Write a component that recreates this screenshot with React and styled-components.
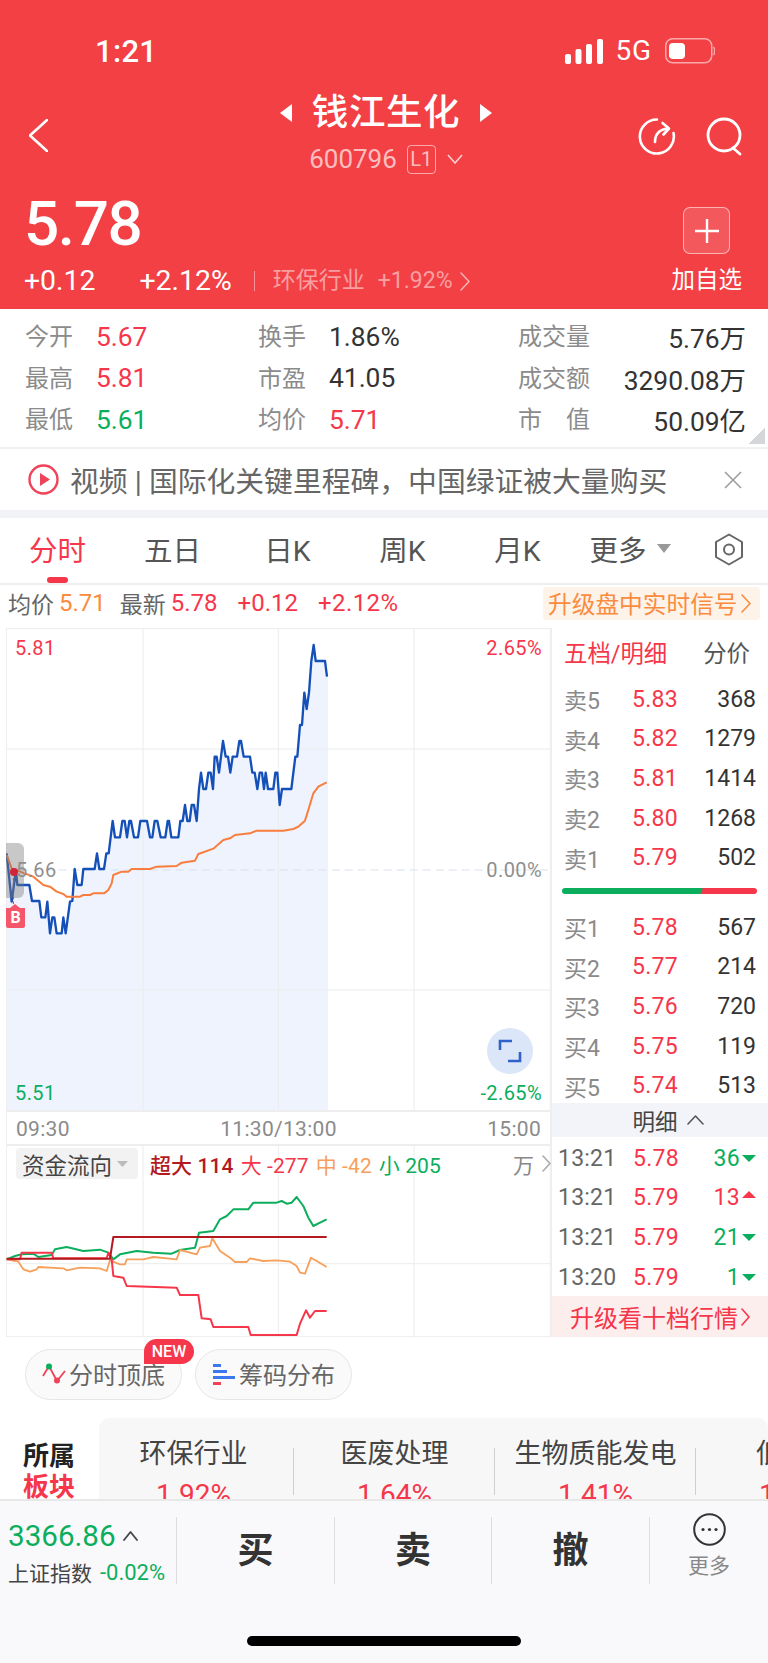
import React from 'react';
import styled, { createGlobalStyle } from 'styled-components';

const FONT = `Roboto, "Noto Sans CJK SC", "Noto Sans", sans-serif`;
const RED = '#f6364a';
const GREEN = '#0bae5c';
const ORANGE = '#fb8b3e';
const HEAD = '#f24045';

const Global = createGlobalStyle`
  html, body { margin: 0; padding: 0; background: #fff; }
  body { font-family: ${FONT}; }
  * { box-sizing: border-box; }
`;

const Page = styled.div`
  width: 768px; height: 1663px; overflow: hidden; display: flex; flex-direction: column; background: #fff;
`;

/* header */
const Header = styled.header`
  height: 309px; background: ${HEAD}; color: #fff; display: flex; flex-direction: column;
`;
const StatusBar = styled.div`
  height: 91px; padding: 37px 53px 0 95px; display: flex; justify-content: space-between; align-items: flex-start;
`;
const Clock = styled.div`
  font-size: 31px; line-height: 30px; font-weight: 500; letter-spacing: 0.3px;
`;
const StatusRight = styled.div`
  display: flex; align-items: center; gap: 13px; height: 28px; margin-left: -4px;
`;
const NetLabel = styled.span`
  font-size: 28px; line-height: 28px; font-weight: 400; letter-spacing: 0.8px;
`;
const Nav = styled.div`
  display: grid; grid-template-columns: 1fr auto 1fr; height: 89px; align-items: start; padding: 0 25px 0 29px;
`;
const BackWrap = styled.div`
  padding-top: 28px; display: flex;
`;
const NavCenter = styled.div`
  display: flex; flex-direction: column; align-items: center;
`;
const TitleRow = styled.div`
  display: flex; align-items: center; gap: 20px; height: 44px;
`;
const Title = styled.div`
  font-size: 36.5px; line-height: 44px; font-weight: 500; letter-spacing: 0.6px;
`;
const SubRow = styled.div`
  display: flex; align-items: center; margin-top: 9px; height: 30px; color: rgba(255,255,255,.68);
`;
const Code = styled.span`
  font-size: 26px; line-height: 30px;
`;
const LevelTag = styled.span`
  margin: 0 11px 0 10px; width: 29px; height: 29px; border: 1px solid rgba(255,255,255,.55); border-radius: 4px;
  font-size: 20px; line-height: 27px; text-align: center;
`;
const NavIcons = styled.div`
  display: flex; justify-content: flex-end; gap: 30px; padding-top: 26px;
`;
const PriceArea = styled.div`
  display: flex; justify-content: space-between; padding: 12px 26px 0 24px;
`;
const PriceCol = styled.div`
  display: flex; flex-direction: column;
`;
const BigPrice = styled.div`
  font-size: 62px; line-height: 64px; font-weight: 500; letter-spacing: -1.4px;
`;
const QuoteRow = styled.div`
  display: flex; align-items: center; margin-top: 10px; height: 30px;
`;
const ChangeText = styled.span`
  font-size: 28.4px; line-height: 30px; margin-right: ${p => p.$mr || 0}px;
`;
const Pipe = styled.span`
  width: 1px; height: 20px; background: rgba(255,255,255,.45); margin-right: 18px;
`;
const Faint = styled.span`
  font-size: 23px; line-height: 30px; color: rgba(255,255,255,.5); margin-right: ${p => p.$mr || 0}px;
`;
const AddCol = styled.div`
  display: flex; flex-direction: column; align-items: center; padding-top: 15px;
`;
const AddBtn = styled.div`
  width: 47px; height: 47px; border-radius: 7px; border: 1px solid rgba(255,255,255,.55);
  background: rgba(255,255,255,.13); display: flex; align-items: center; justify-content: center;
`;
const AddLabel = styled.div`
  margin-top: 11px; font-size: 23.5px; line-height: 30px;
`;

/* stats */
const Stats = styled.section`
  height: 138px; padding: 6px 22px 0 25px; display: grid; grid-template-columns: 233px 260px 1fr; grid-auto-rows: 41.5px;
  background: linear-gradient(135deg, transparent 50%, #d5d6d9 50%) 749px 119px / 16px 16px no-repeat;
`;
const Stat = styled.div`
  display: flex; align-items: center; justify-content: ${p => (p.$wide ? 'space-between' : 'flex-start')};
`;
const StatLabel = styled.span`
  font-size: 24px; color: #8b8b8b; width: ${p => (p.$wide ? 'auto' : '71px')}; margin-top: -2px;
`;
const StatValue = styled.span`
  font-size: 26.4px; color: ${p => p.$c || '#333'}; margin-top: 2px;
`;

/* banner */
const Banner = styled.section`
  height: 63px; border-top: 2px solid #f0f1f4; padding: 0 26px 0 28px; display: flex; align-items: center;
`;
const BannerText = styled.div`
  margin-left: 11px; flex: 1; font-size: 28.8px; color: #666; white-space: nowrap;
`;
const Gap = styled.div`
  height: 8px; background: #f2f3f7;
`;

/* tabs */
const Tabs = styled.nav`
  height: 67px; border-bottom: 2px solid #eee; display: grid; grid-template-columns: repeat(6, 115px) 1fr; align-items: center;
`;
const Tab = styled.div`
  height: 65px; display: flex; align-items: center; justify-content: center; gap: 10px; position: relative;
  font-size: 28.5px; color: ${p => (p.$on ? RED : '#555')}; padding: 0 ${p => p.$pr || 0}px 4px 0;
  ${p => p.$on && `&::after { content: ''; position: absolute; left: 47px; bottom: 0; width: 21px; height: 6px; border-radius: 3px; background: ${RED}; }`}
`;
const TabIcon = styled.div`
  display: flex; justify-content: center; padding: 0 0 3px 0;
`;

/* quote line */
const QuoteLine = styled.div`
  height: 43px; display: flex; align-items: center; padding: 0 8px 7px 8px;
`;
const QLabel = styled.span`
  font-size: 23px; color: #666; margin-right: 5px;
`;
const QValue = styled.span`
  font-size: 24px; color: ${p => p.$c}; margin-right: ${p => p.$mr}px; letter-spacing: ${p => p.$ls || 0}px;
`;
const UpgradeChip = styled.div`
  margin-left: auto; width: 217px; height: 33px; background: #fdf3e8; border-radius: 4px; padding-left: 5px;
  display: flex; align-items: center; gap: 3px; font-size: 23.7px; color: ${ORANGE}; white-space: nowrap;
`;

/* market */
const Market = styled.section`
  display: grid; grid-template-columns: 551px 217px; height: 709px;
`;
const ChartCol = styled.div`
  padding-left: 6px; display: flex; flex-direction: column;
`;
const ChartBox = styled.div`
  position: relative; height: ${p => p.$h}px; width: 545px;
`;
const PlotSvg = styled.svg`
  display: block; width: 545px; height: ${p => p.$h}px;
`;
const AxisLabel = styled.span`
  position: absolute; font-size: 20px; letter-spacing: 0.4px; line-height: 22px; color: ${p => p.$c};
  ${p => p.$left !== undefined && `left: ${p.$left}px;`}
  ${p => p.$right !== undefined && `right: ${p.$right}px;`}
  top: ${p => p.$top}px;
`;
const Handle = styled.div`
  position: absolute; left: 0; top: 215px; width: 18px; height: 55px; background: rgba(125,125,125,.42); border-radius: 0 6px 6px 0;
`;
const BuyMark = styled.div`
  position: absolute; left: 0; top: 280px; width: 19px; height: 20px; background: #f6566a; color: #fff;
  font-size: 16px; font-weight: 700; line-height: 20px; text-align: center; border-radius: 0 0 2px 2px;
  &::before { content: ''; position: absolute; left: 4px; top: -4px; border: 5px solid transparent; border-top: 0; border-bottom: 4px solid #f6566a; }
`;
const Expand = styled.div`
  position: absolute; left: 481px; top: 400px; width: 46px; height: 46px; border-radius: 50%; background: #dbe6f8;
  display: flex; align-items: center; justify-content: center;
`;
const TimeRow = styled.div`
  height: 36px; width: 545px; border-top: 2px solid #eee; border-bottom: 2px solid #eee; border-right: 1px solid #eee; border-left: 1px solid #eee;
  display: flex; justify-content: space-between; align-items: center; padding: 2px 9px 0; font-size: 21px; letter-spacing: 0.3px; color: #8a8a8a;
`;
const FlowLegend = styled.div`
  position: absolute; left: 10px; top: 2px; right: 0; display: flex; align-items: center; height: 31px; font-size: 21px;
`;
const FlowChip = styled.div`
  width: 122px; height: 31px; background: #f2f2f2; border-radius: 4px; padding-left: 6px; display: flex; align-items: center; gap: 5px;
  font-size: 22.5px; color: #444; margin-right: 12px;
`;
const FlowItem = styled.span`
  color: ${p => p.$c}; margin-right: 7px; white-space: nowrap; font-weight: ${p => p.$w || 400}; letter-spacing: 0.1px;
`;
const FlowUnit = styled.span`
  margin-left: auto; display: flex; align-items: center; gap: 8px; color: #888; font-size: 21px;
`;

/* order book */
const Book = styled.div`
  border-left: 1px solid #eee; display: flex; flex-direction: column;
`;
const BookHead = styled.div`
  height: 50px; padding: 0 18px 3px 12px; display: flex; justify-content: space-between; align-items: center; font-size: 23.4px;
`;
const BookTitle = styled.span`
  color: ${p => p.$c};
`;
const BookRow = styled.div`
  height: 39.6px; padding: 3px 12px 0 ${p => p.$pl || 12}px; display: grid; grid-template-columns: ${p => p.$time ? '75px' : '68px'} 1fr auto; align-items: center; font-size: 23px;
`;
const RowLabel = styled.span`
  color: ${p => p.$c || '#8a8a8a'}; font-size: ${p => p.$fs || 23}px; letter-spacing: ${p => p.$ls || 0}px;
`;
const RowPrice = styled.span`
  color: ${RED}; letter-spacing: 0.3px;
`;
const RowQty = styled.span`
  color: #333;
`;
const RatioBar = styled.div`
  height: 30px; padding: 12px 11px 0 10px;
`;
const RatioTrack = styled.div`
  height: 6px; border-radius: 3px; background: linear-gradient(105deg, ${GREEN} 71%, ${RED} 72%);
`;
const DetailHead = styled.div`
  height: 34px; margin-top: -1px; background: #f2f4f9; display: flex; align-items: center; justify-content: center; gap: 9px; font-size: 22.5px; color: #444; padding-left: 16px;
`;
const VolCell = styled.span`
  display: flex; align-items: center; gap: 2px; color: ${p => p.$c}; letter-spacing: 0.3px;
`;
const Tri = styled.span`
  width: 0; height: 0; border-left: 7px solid transparent; border-right: 7px solid transparent;
  ${p => (p.$up ? `border-bottom: 7px solid ${RED}; margin-top: -6px;` : `border-top: 7px solid ${GREEN}; margin-top: 1px;`)}
`;
const BookUpgrade = styled.div`
  margin-top: 1px; height: 41px; background: #fdeeee; color: ${RED}; font-size: 24px; display: flex; align-items: center; justify-content: center; gap: 3px;
`;

/* chips */
const ChipRow = styled.div`
  display: flex; gap: 13px; padding: 12px 0 0 25px; height: 63px;
`;
const Pill = styled.div`
  position: relative; width: 157px; height: 51px; border: 1px solid #e6e6e6; border-radius: 26px; background: #fafafa;
  display: flex; align-items: center; padding: 0 0 2px 16px; gap: 3px; font-size: 24px; color: #666;
`;
const NewBadge = styled.span`
  position: absolute; left: 118px; top: -11px; width: 50px; height: 25px; background: ${RED}; color: #fff;
  border-radius: 13px 13px 13px 0; font-size: 16px; line-height: 25px; text-align: center; font-weight: 500;
`;

/* sectors */
const SectorWrap = styled.section`
  margin-top: 18px; height: 81px; overflow: hidden; display: flex;
`;
const SectorHead = styled.div`
  width: 99px; padding: 23px 0 0 23px; font-size: 26px; font-weight: 700; line-height: 31px; color: #222;
`;
const SectorHot = styled.div`
  color: ${RED}; line-height: 23px; margin-top: 4px;
`;
const SectorPanel = styled.div`
  flex: 1; background: #f7f7f7; border-radius: 10px 10px 0 0; display: flex; overflow: hidden;
`;
const SectorTrack = styled.div`
  display: flex; margin-left: -6px; flex: none;
`;
const SectorCell = styled.div`
  width: 201px; flex: none; padding-top: 19px; text-align: center; white-space: nowrap;
  background: linear-gradient(#cfcfcf, #cfcfcf) right 30px / 1px 47px no-repeat;
`;
const SectorName = styled.div`
  font-size: 27px; line-height: 34px; color: #444;
`;
const SectorValue = styled.div`
  margin-top: 7px; font-size: 28px; line-height: 34px; color: ${RED};
`;

/* footer */
const Footer = styled.footer`
  flex: 1; background: #f9f9fb; border-top: 2px solid #e8e8e8; padding-top: 16px; display: flex; flex-direction: column; align-items: center;
`;
const FooterGrid = styled.div`
  width: 768px; height: 60px; display: grid; grid-template-columns: 177px 158px 157px 158px 1fr;
`;
const IndexCell = styled.div`
  border-right: 1px solid #ddd; padding: 4px 0 0 8px; display: flex; flex-direction: column;
`;
const IndexTop = styled.div`
  display: flex; align-items: center; gap: 7px; height: 30px; font-size: 29.6px; color: ${GREEN};
`;
const IndexBottom = styled.div`
  margin-top: 9px; display: flex; align-items: center; gap: 8px; white-space: nowrap; height: 24px;
`;
const IndexName = styled.span`
  font-size: 21px; color: #444;
`;
const IndexDelta = styled.span`
  font-size: 22px; color: ${GREEN};
`;
const TradeBtn = styled.div`
  border-right: 1px solid #ddd; display: flex; align-items: center; justify-content: center; font-size: 36px; font-weight: 700; color: #333; padding-bottom: 8px;
`;
const MoreCell = styled.div`
  display: flex; flex-direction: column; align-items: center; margin-top: -4px; gap: 8px; font-size: 21px; line-height: 24px; color: #888;
`;
const HomeBar = styled.div`
  margin-top: 59px; width: 274px; height: 10px; border-radius: 5px; background: #000;
`;

/* data */
const toPts = a => a.map(p => p.join(',')).join(' ');
const blue = [[20,700],[35,845],[48,750],[52,795],[88,795],[96,843],[118,843],[124,892],[136,892],[142,845],[150,940],[157,892],[163,892],[170,940],[185,940],[190,892],[197,940],[210,845],[217,843],[224,747],[232,795],[245,795],[250,747],[284,747],[291,700],[298,747],[312,747],[319,700],[326,700],[338,603],[345,652],[360,652],[367,603],[374,603],[381,652],[388,603],[393,603],[402,652],[414,652],[421,603],[441,603],[450,652],[457,652],[464,603],[472,603],[482,652],[496,652],[503,603],[507,603],[514,652],[535,652],[541,603],[548,603],[555,555],[562,603],[569,603],[575,555],[582,555],[590,603],[597,507],[603,458],[610,507],[618,507],[625,458],[632,458],[639,507],[644,410],[650,410],[657,458],[669,363],[677,410],[684,410],[691,458],[698,410],[711,410],[718,363],[723,363],[731,410],[750,410],[757,458],[764,458],[772,507],[779,458],[786,458],[792,507],[797,458],[804,507],[820,507],[826,458],[832,458],[839,555],[846,507],[874,507],[886,410],[892,410],[900,315],[906,315],[913,218],[920,267],[927,218],[934,123],[941,75],[947,123],[975,123],[981,170]];
const avg = [[20,705],[35,745],[60,755],[100,770],[130,795],[150,800],[170,815],[190,822],[200,830],[240,830],[250,825],[270,825],[280,820],[312,820],[325,810],[335,790],[340,765],[365,755],[385,755],[395,747],[450,747],[470,740],[530,738],[545,728],[585,722],[595,702],[640,686],[670,660],[690,655],[705,645],[750,640],[770,632],[850,632],[880,627],[895,620],[915,602],[925,570],[940,520],[955,500],[980,487]];
const fGreen = [[20,475],[45,465],[65,460],[100,458],[115,468],[155,462],[165,445],[200,438],[250,450],[300,446],[325,455],[340,475],[360,460],[410,450],[460,455],[515,458],[540,447],[585,440],[597,395],[640,390],[660,355],[680,345],[700,325],[745,325],[760,305],[830,305],[845,300],[860,308],[875,305],[890,288],[910,315],[925,350],[940,375],[960,365],[980,355]];
const fOrange = [[20,475],[55,482],[70,505],[90,512],[110,505],[115,498],[190,502],[200,508],[240,500],[300,502],[320,510],[330,478],[360,490],[375,490],[380,475],[430,475],[460,468],[530,475],[540,447],[590,460],[600,440],[630,435],[637,412],[660,450],[690,470],[705,483],[740,483],[750,472],[790,480],[830,478],[870,482],[890,495],[900,515],[915,518],[933,470],[950,480],[980,498]];
const fRed = [[20,475],[60,475],[65,455],[155,455],[160,472],[320,472],[325,455],[335,475],[340,525],[370,530],[380,555],[530,560],[540,582],[595,582],[605,652],[632,655],[640,678],[745,678],[752,702],[890,702],[900,668],[918,628],[930,650],[945,630],[980,630]];
const fDark = [[20,473],[330,473],[340,408],[980,408]];

const stats = [
  ['今开', '5.67', RED, '换手', '1.86%', '#333', '成交量', '5.76万'],
  ['最高', '5.81', RED, '市盈', '41.05', '#333', '成交额', '3290.08万'],
  ['最低', '5.61', GREEN, '均价', '5.71', RED, '市\u3000值', '50.09亿'],
];
const sells = [['卖5','5.83','368'],['卖4','5.82','1279'],['卖3','5.81','1414'],['卖2','5.80','1268'],['卖1','5.79','502']];
const buys = [['买1','5.78','567'],['买2','5.77','214'],['买3','5.76','720'],['买4','5.75','119'],['买5','5.74','513']];
const ticks = [['13:21','5.78','36',false],['13:21','5.79','13',true],['13:21','5.79','21',false],['13:20','5.79','1',false]];
const sectors = [['环保行业','1.92%'],['医废处理','1.64%'],['生物质能发电','1.41%'],['低碳化','1.20%']];
const bannerText = '视频 | 国际化关键里程碑\uFF0C中国绿证被大量购买';

const Chevron = ({ w = 10, h = 20, color = '#fff', sw = 2, dir = 'right' }) => {
  const d = dir === 'right' ? `M1 1 L${w - 1} ${h / 2} L1 ${h - 1}` : dir === 'left' ? `M${w - 1} 1 L1 ${h / 2} L${w - 1} ${h - 1}` : dir === 'down' ? `M1 1 L${w / 2} ${h - 1} L${w - 1} 1` : `M1 ${h - 1} L${w / 2} 1 L${w - 1} ${h - 1}`;
  return <svg width={w} height={h} viewBox={`0 0 ${w} ${h}`} fill="none" stroke={color} strokeWidth={sw} strokeLinecap="round" strokeLinejoin="round"><path d={d} /></svg>;
};

const PlotOverlayDot = styled.div`
  position: absolute; left: 4px; top: 240px; width: 8px; height: 8px; border-radius: 50%; background: #d2243a;
`;

const MainChart = () => (
  <ChartBox $h={482}>
    <PlotSvg $h={482} viewBox="18 24 1635 1446">
      <rect x="18" y="24" width="1635" height="1446" fill="#fff" />
      <polygon points={`20,1470 ${toPts(blue)} 984,170 984,1470`} fill="#eef3fe" />
      <g stroke="#ececec" strokeWidth="3" fill="none">
        <path d="M18 26 H1650 M18 387 H1650 M18 1110 H1650" />
        <path d="M19 24 V1470 M429 24 V1470 M835 24 V1470 M1242 24 V1470 M1651 24 V1470" />
      </g>
      <path d="M20 750 H1650" stroke="#d8e1ea" strokeWidth="3" strokeDasharray="24 15" fill="none" />
      <polyline points={toPts(blue)} fill="none" stroke="#1450b8" strokeWidth="7" strokeLinejoin="round" />
      <polyline points={toPts(avg)} fill="none" stroke="#f97d3d" strokeWidth="6" strokeLinejoin="round" />
      <path d="M40 760 V860" stroke="#d8233a" strokeWidth="3" strokeDasharray="8 6" />
    </PlotSvg>
    <Handle />
    <PlotOverlayDot />
    <BuyMark>B</BuyMark>
    <AxisLabel $left={9} $top={9} $c={RED}>5.81</AxisLabel>
    <AxisLabel $right={9} $top={9} $c={RED}>2.65%</AxisLabel>
    <AxisLabel $left={10} $top={231} $c="#8f8f8f">5.66</AxisLabel>
    <AxisLabel $right={9} $top={231} $c="#8f8f8f">0.00%</AxisLabel>
    <AxisLabel $left={9} $top={454} $c={GREEN}>5.51</AxisLabel>
    <AxisLabel $right={9} $top={454} $c={GREEN}>-2.65%</AxisLabel>
    <Expand>
      <svg width="24" height="24" viewBox="0 0 24 24" fill="none" stroke="#2f63c9" strokeWidth="2.6">
        <path d="M2 11 V2 H14 M22 13 V22 H10" />
      </svg>
    </Expand>
  </ChartBox>
);

const FlowChart = () => (
  <ChartBox $h={191}>
    <PlotSvg $h={191} viewBox="18 135 1635 573">
      <g stroke="#ececec" strokeWidth="3" fill="none">
        <path d="M18 488 H1650 M18 707 H1650" />
        <path d="M19 135 V708 M429 135 V708 M835 135 V708 M1242 135 V708 M1651 135 V708" />
      </g>
      <polyline points={toPts(fGreen)} fill="none" stroke="#0bae5c" strokeWidth="6" strokeLinejoin="round" />
      <polyline points={toPts(fOrange)} fill="none" stroke="#f6a05c" strokeWidth="5.5" strokeLinejoin="round" />
      <polyline points={toPts(fRed)} fill="none" stroke="#f6364a" strokeWidth="6" strokeLinejoin="round" />
      <polyline points={toPts(fDark)} fill="none" stroke="#b3191f" strokeWidth="6" strokeLinejoin="round" />
    </PlotSvg>
    <FlowLegend>
      <FlowChip>资金流向
        <svg width="11" height="6" viewBox="0 0 11 6"><path d="M0 0 H11 L5.5 6 Z" fill="#bbb" /></svg>
      </FlowChip>
      <FlowItem $c="#b3191f" $w={500}>超大 114</FlowItem>
      <FlowItem $c={RED}>大 -277</FlowItem>
      <FlowItem $c="#f6a05c">中 -42</FlowItem>
      <FlowItem $c={GREEN}>小 205</FlowItem>
      <FlowUnit>万<Chevron w={9} h={17} color="#aaa" sw={1.6} /></FlowUnit>
    </FlowLegend>
  </ChartBox>
);

export default function App() {
  return (
    <Page>
      <Global />
      <Header>
        <StatusBar>
          <Clock>1:21</Clock>
          <StatusRight>
            <svg width="38" height="25" viewBox="0 0 38 25" fill="#fff">
              <rect x="0" y="15" width="6" height="10" rx="2" />
              <rect x="10.5" y="10" width="6" height="15" rx="2" />
              <rect x="21" y="5" width="6" height="20" rx="2" />
              <rect x="32" y="0" width="6" height="25" rx="2" />
            </svg>
            <NetLabel>5G</NetLabel>
            <svg width="50" height="26" viewBox="0 0 50 26" fill="none">
              <rect x="0.75" y="0.75" width="46" height="24" rx="7" stroke="rgba(255,255,255,.55)" strokeWidth="1.5" />
              <rect x="4" y="5" width="16" height="16" rx="4" fill="#fff" />
              <path d="M48.5 9 C50 10.5 50 15.5 48.5 17" stroke="rgba(255,255,255,.55)" strokeWidth="1.5" />
            </svg>
          </StatusRight>
        </StatusBar>
        <Nav>
          <BackWrap>
            <Chevron dir="left" w={19} h={33} sw={2.6} />
          </BackWrap>
          <NavCenter>
            <TitleRow>
              <svg width="12" height="18" viewBox="0 0 12 18"><path d="M12 0 V18 L0 9 Z" fill="#fff" /></svg>
              <Title>钱江生化</Title>
              <svg width="12" height="18" viewBox="0 0 12 18"><path d="M0 0 V18 L12 9 Z" fill="#fff" /></svg>
            </TitleRow>
            <SubRow>
              <Code>600796</Code>
              <LevelTag>L1</LevelTag>
              <svg width="16" height="10" viewBox="0 0 16 10" fill="none" stroke="rgba(255,255,255,.75)" strokeWidth="1.6"><path d="M1 1 L8 9 L15 1" /></svg>
            </SubRow>
          </NavCenter>
          <NavIcons>
            <svg width="38" height="39" viewBox="0 0 38 39" fill="none" stroke="#fff" strokeWidth="2.6" strokeLinecap="round" strokeLinejoin="round">
              <path d="M19 2.5 A17 17 0 1 0 35.5 16" />
              <path d="M17 25 C17 17 21 12.5 30 11.5" />
              <path d="M24.5 6 L31 11.5 L25.5 17.5" />
            </svg>
            <svg width="37" height="39" viewBox="0 0 37 39" fill="none" stroke="#fff" strokeWidth="2.8" strokeLinecap="round">
              <circle cx="18" cy="18" r="16" />
              <path d="M27 31 L34 37" />
            </svg>
          </NavIcons>
        </Nav>
        <PriceArea>
          <PriceCol>
            <BigPrice>5.78</BigPrice>
            <QuoteRow>
              <ChangeText $mr={44}>+0.12</ChangeText>
              <ChangeText $mr={22}>+2.12%</ChangeText>
              <Pipe />
              <Faint $mr={13}>环保行业</Faint>
              <Faint $mr={8}>+1.92%</Faint>
              <Chevron w={10} h={19} color="rgba(255,255,255,.6)" sw={1.5} />
            </QuoteRow>
          </PriceCol>
          <AddCol>
            <AddBtn>
              <svg width="24" height="24" viewBox="0 0 24 24" stroke="#fff" strokeWidth="2.4"><path d="M12 0 V24 M0 12 H24" /></svg>
            </AddBtn>
            <AddLabel>加自选</AddLabel>
          </AddCol>
        </PriceArea>
      </Header>

      <Stats>
        {stats.map(r => (
          <React.Fragment key={r[0]}>
            <Stat><StatLabel>{r[0]}</StatLabel><StatValue $c={r[2]}>{r[1]}</StatValue></Stat>
            <Stat><StatLabel>{r[3]}</StatLabel><StatValue $c={r[5]}>{r[4]}</StatValue></Stat>
            <Stat $wide><StatLabel $wide>{r[6]}</StatLabel><StatValue>{r[7]}</StatValue></Stat>
          </React.Fragment>
        ))}
      </Stats>

      <Banner>
        <svg width="31" height="31" viewBox="0 0 31 31" fill="none">
          <circle cx="15.5" cy="15.5" r="14" stroke="#ee4358" strokeWidth="2.4" />
          <path d="M12 9 L22 15.5 L12 22 Z" fill="#ee4358" />
        </svg>
        <BannerText>{bannerText}</BannerText>
        <svg width="18" height="18" viewBox="0 0 18 18" stroke="#999" strokeWidth="1.5"><path d="M1 1 L17 17 M17 1 L1 17" /></svg>
      </Banner>
      <Gap />

      <Tabs>
        <Tab $on>分时</Tab>
        <Tab>五日</Tab>
        <Tab>日K</Tab>
        <Tab>周K</Tab>
        <Tab>月K</Tab>
        <Tab $pr={5}>更多
          <svg width="14" height="9" viewBox="0 0 14 9"><path d="M0 0 H14 L7 9 Z" fill="#999" /></svg>
        </Tab>
        <TabIcon>
          <svg width="30" height="33" viewBox="0 0 30 33" fill="none" stroke="#666" strokeWidth="2">
            <path d="M15 1.5 L28 9 V24 L15 31.5 L2 24 V9 Z" strokeLinejoin="round" />
            <circle cx="15" cy="16.5" r="5" />
          </svg>
        </TabIcon>
      </Tabs>

      <QuoteLine>
        <QLabel>均价</QLabel><QValue $c={ORANGE} $mr={14}>5.71</QValue>
        <QLabel>最新</QLabel><QValue $c={RED} $mr={20}>5.78</QValue>
        <QValue $c={RED} $mr={20}>+0.12</QValue>
        <QValue $c={RED} $mr={0} $ls={0.4}>+2.12%</QValue>
        <UpgradeChip>升级盘中实时信号<Chevron w={10} h={19} color={ORANGE} sw={1.6} /></UpgradeChip>
      </QuoteLine>

      <Market>
        <ChartCol>
          <MainChart />
          <TimeRow><span>09:30</span><span>11:30/13:00</span><span>15:00</span></TimeRow>
          <FlowChart />
        </ChartCol>
        <Book>
          <BookHead><BookTitle $c={RED}>五档/明细</BookTitle><BookTitle $c="#555">分价</BookTitle></BookHead>
          {sells.map(r => (
            <BookRow key={r[0]}><RowLabel>{r[0]}</RowLabel><RowPrice>{r[1]}</RowPrice><RowQty>{r[2]}</RowQty></BookRow>
          ))}
          <RatioBar><RatioTrack /></RatioBar>
          {buys.map(r => (
            <BookRow key={r[0]}><RowLabel>{r[0]}</RowLabel><RowPrice>{r[1]}</RowPrice><RowQty>{r[2]}</RowQty></BookRow>
          ))}
          <DetailHead>明细<Chevron dir="up" w={17} h={10} color="#555" sw={1.6} /></DetailHead>
          {ticks.map((r, i) => (
            <BookRow key={i} $pl={6} $time>
              <RowLabel $c="#666" $ls={0.2}>{r[0]}</RowLabel>
              <RowPrice>{r[1]}</RowPrice>
              <VolCell $c={r[3] ? RED : GREEN}>{r[2]}<Tri $up={r[3]} /></VolCell>
            </BookRow>
          ))}
          <BookUpgrade>升级看十档行情<Chevron w={9} h={18} color={RED} sw={1.6} /></BookUpgrade>
        </Book>
      </Market>

      <ChipRow>
        <Pill>
          <svg width="24" height="22" viewBox="0 0 24 22" fill="none">
            <path d="M1 13 L7 3 L15 18 L23 8" stroke="#ee4358" strokeWidth="1.8" />
            <circle cx="7" cy="3.5" r="3" fill="#0bae5c" />
            <circle cx="15" cy="17.5" r="3" fill="#ee4358" />
          </svg>
          分时顶底
          <NewBadge>NEW</NewBadge>
        </Pill>
        <Pill>
          <svg width="24" height="22" viewBox="0 0 24 22">
            <rect x="1" y="1" width="8" height="3" fill="#3b78f0" />
            <rect x="1" y="7" width="14" height="3" fill="#3b78f0" />
            <rect x="1" y="13" width="22" height="3" fill="#3b78f0" />
            <rect x="1" y="19" width="8" height="3" fill="#ee4358" />
          </svg>
          筹码分布
        </Pill>
      </ChipRow>

      <SectorWrap>
        <SectorHead>所属<SectorHot>板块</SectorHot></SectorHead>
        <SectorPanel>
          <SectorTrack>
            {sectors.map(s => (
              <SectorCell key={s[0]}>
                <SectorName>{s[0]}</SectorName>
                <SectorValue>{s[1]}</SectorValue>
              </SectorCell>
            ))}
          </SectorTrack>
        </SectorPanel>
      </SectorWrap>

      <Footer>
        <FooterGrid>
          <IndexCell>
            <IndexTop>3366.86<Chevron dir="up" w={15} h={10} color="#444" sw={1.8} /></IndexTop>
            <IndexBottom><IndexName>上证指数</IndexName><IndexDelta>-0.02%</IndexDelta></IndexBottom>
          </IndexCell>
          <TradeBtn>买</TradeBtn>
          <TradeBtn>卖</TradeBtn>
          <TradeBtn>撤</TradeBtn>
          <MoreCell>
            <svg width="33" height="33" viewBox="0 0 33 33" fill="none">
              <circle cx="16.5" cy="16.5" r="15.3" stroke="#333" strokeWidth="2" />
              <circle cx="10" cy="16.5" r="1.6" fill="#333" />
              <circle cx="16.5" cy="16.5" r="1.6" fill="#333" />
              <circle cx="23" cy="16.5" r="1.6" fill="#333" />
            </svg>
            更多
          </MoreCell>
        </FooterGrid>
        <HomeBar />
      </Footer>
    </Page>
  );
}
